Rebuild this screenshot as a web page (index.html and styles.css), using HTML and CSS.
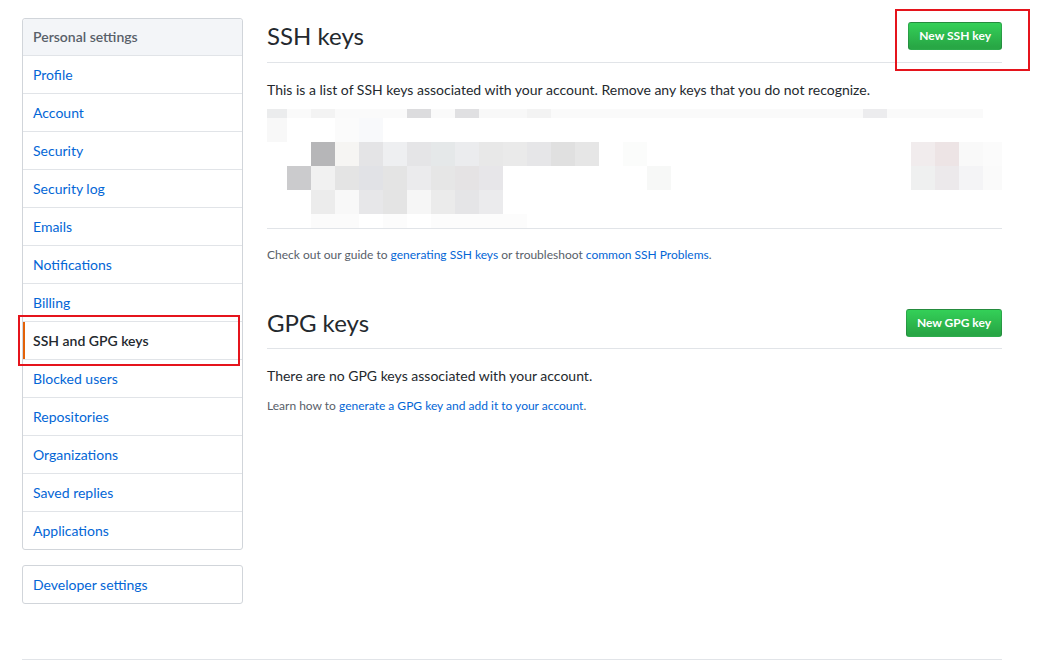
FILE: index.html
```html
<!DOCTYPE html>
<html lang="en">
<head>
<meta charset="utf-8">
<title>SSH and GPG keys</title>
<link rel="stylesheet" href="styles.css">
</head>
<body>
<div class="page">
  <div class="layout">
    <aside class="sidebar">
      <nav class="menu">
        <h3 class="menu-heading">Personal settings</h3>
        <a class="menu-item" href="#">Profile</a>
        <a class="menu-item" href="#">Account</a>
        <a class="menu-item" href="#">Security</a>
        <a class="menu-item" href="#">Security log</a>
        <a class="menu-item" href="#">Emails</a>
        <a class="menu-item" href="#">Notifications</a>
        <a class="menu-item" href="#">Billing</a>
        <a class="menu-item selected" href="#">SSH and GPG keys<span class="annot annot-menu"></span></a>
        <a class="menu-item" href="#">Blocked users</a>
        <a class="menu-item" href="#">Repositories</a>
        <a class="menu-item" href="#">Organizations</a>
        <a class="menu-item" href="#">Saved replies</a>
        <a class="menu-item last" href="#">Applications</a>
      </nav>
      <nav class="menu">
        <a class="menu-item last" href="#">Developer settings</a>
      </nav>
    </aside>

    <main class="main">
      <div class="subhead">
        <h2 class="subhead-heading">SSH keys</h2>
        <div class="subhead-actions">
          <a class="btn" href="#">New SSH key<span class="annot annot-btn"></span></a>
        </div>
      </div>
      <p class="lead">This is a list of SSH keys associated with your account. Remove any keys that you do not recognize.</p>

      <div class="mosaic">
        <div class="mrow r1">
          <i style="background:#ebeced"></i><i style="background:#fafafa"></i><i style="background:#f3f3f3"></i><i style="background:#fafafa"></i><i style="background:#fafafa"></i><i style="background:#fafafa"></i><i style="background:#dcdcde"></i><i style="background:#fafafa"></i><i style="background:#e0e0e2"></i><i style="background:#f8f8f8"></i><i style="background:#f8f8f8"></i><i style="background:#f3f3f3"></i><i style="background:#fafafa"></i><i style="background:#fafafa"></i><i style="background:#fafafa"></i><i style="background:#fafafa"></i><i style="background:#fafafa"></i><i style="background:#fafafa"></i><i style="background:#fafafa"></i><i style="background:#fafafa"></i><i style="background:#fafafa"></i><i style="background:#fafafa"></i><i style="background:#fafafa"></i><i style="background:#fafafa"></i><i style="background:#fafafa"></i><i style="background:#ececee"></i><i style="background:#fafafa"></i><i style="background:#fafafa"></i><i style="background:#fafafa"></i><i style="background:#fafafa"></i>
        </div>
        <div class="mrow r2">
          <i style="background:#f8f8f8"></i><i></i><i></i><i style="background:#fbfbfb"></i><i style="background:#f8f9fb"></i>
        </div>
        <div class="mrow r3">
          <i></i><i></i><i style="background:#b6b6b8"></i><i style="background:#f6f5f3"></i><i style="background:#e4e4e6"></i><i style="background:#eeeff1"></i><i style="background:#e5e5e7"></i><i style="background:#e5e8e9"></i><i style="background:#ebecee"></i><i style="background:#e8e8e8"></i><i style="background:#eaeaea"></i><i style="background:#e6e6e8"></i><i style="background:#e0e0e0"></i><i style="background:#e6e6e6"></i><i></i><i style="background:#fbfcfb"></i><i></i><i></i><i></i><i></i><i></i><i></i><i></i><i></i><i></i><i></i><i></i><i style="background:#f1eced"></i><i style="background:#ede4e5"></i><i style="background:#f9f9f9"></i><i style="background:#fbfbfb"></i>
        </div>
        <div class="mrow r4">
          <i></i><i style="background:#cbcbcd"></i><i style="background:#f1f1f1"></i><i style="background:#e4e4e4"></i><i style="background:#e1e2e6"></i><i style="background:#e4e4e4"></i><i style="background:#ebebed"></i><i style="background:#e6e6e6"></i><i style="background:#e5e3e4"></i><i style="background:#e7e6e9"></i><i></i><i></i><i></i><i></i><i></i><i></i><i style="background:#f7f8f7"></i><i></i><i></i><i></i><i></i><i></i><i></i><i></i><i></i><i></i><i></i><i style="background:#eff0f0"></i><i style="background:#ece9eb"></i><i style="background:#f4f4f6"></i><i style="background:#fafafa"></i>
        </div>
        <div class="mrow r5">
          <i></i><i></i><i style="background:#ececec"></i><i style="background:#f8f8f8"></i><i style="background:#e7e7e9"></i><i style="background:#e4e4e4"></i><i style="background:#f6f6f6"></i><i style="background:#ebebeb"></i><i style="background:#e5e5e7"></i><i style="background:#ebebed"></i>
        </div>
        <div class="mrow r6">
          <i></i><i></i><i style="background:#fbfbfb"></i><i style="background:#fbfbfb"></i><i></i><i style="background:#fcfcfc"></i><i></i><i style="background:#fcfcfc"></i><i style="background:#fcfcfc"></i><i style="background:#fcfcfc"></i><i style="background:#fcfcfc"></i>
        </div>
      </div>

      <p class="note">Check out our guide to <a href="#">generating SSH keys</a> or troubleshoot <a href="#">common SSH Problems</a>.</p>

      <div class="subhead spacious">
        <h2 class="subhead-heading">GPG keys</h2>
        <div class="subhead-actions">
          <a class="btn" href="#">New GPG key</a>
        </div>
      </div>
      <p class="lead">There are no GPG keys associated with your account.</p>
      <p class="note">Learn how to <a href="#">generate a GPG key and add it to your account</a>.</p>
    </main>
  </div>
  <footer class="footer"></footer>
</div>
</body>
</html>
```

FILE: styles.css
```css
* { box-sizing: border-box; }

html, body {
  margin: 0;
  padding: 0;
  background: #fff;
}

body {
  font-family: Lato, "Noto Sans", "Liberation Sans", sans-serif;
  font-size: 14px;
  line-height: 21px;
  color: #24292e;
}

a { color: #0366d6; text-decoration: none; }

.page {
  width: 980px;
  margin-left: 22px;
  padding-top: 18px;
}

.layout {
  display: flex;
  gap: 24px;
  align-items: flex-start;
}

.sidebar {
  width: 221px;
  flex: 0 0 221px;
  display: flex;
  flex-direction: column;
  gap: 15px;
}

.menu {
  border: 1px solid #d1d5da;
  border-radius: 3px;
  background: #fff;
  display: flex;
  flex-direction: column;
}

.menu-heading {
  margin: 0;
  padding: 8px 10px;
  font-size: 14px;
  line-height: 20px;
  font-weight: 600;
  color: #586069;
  background: #f3f5f8;
  border-bottom: 1px solid #e1e4e8;
  border-radius: 3px 3px 0 0;
}

.menu-item {
  position: relative;
  display: block;
  padding: 8px 10px;
  line-height: 21px;
  color: #0366d6;
  border-bottom: 1px solid #e1e4e8;
}

.menu-item.last { border-bottom: 0; }

.menu-item.selected {
  color: #24292e;
  font-weight: 600;
}

.menu-item.selected::before {
  content: "";
  position: absolute;
  top: 0;
  bottom: 0;
  left: 0;
  width: 2px;
  background: #e36209;
}

.annot {
  position: absolute;
  border: 2px solid #e5141c;
  pointer-events: none;
}

.annot-menu {
  left: -5px;
  top: -7px;
  width: 222px;
  height: 51px;
}

.annot-btn {
  left: -14px;
  top: -14px;
  width: 135px;
  height: 62px;
}

.main {
  width: 735px;
  flex: 0 0 735px;
}

.subhead {
  display: flex;
  padding-bottom: 8px;
  margin-bottom: 16px;
  border-bottom: 1px solid #e1e4e8;
}

.subhead.spacious {
  margin-top: 41px;
  padding-bottom: 7px;
}

.subhead-heading {
  flex: 1 1 auto;
  margin: 0;
  font-size: 24px;
  line-height: 36px;
  font-weight: 400;
}

.subhead-actions {
  align-self: center;
  margin: 4px 0 4px 4px;
}

.btn {
  position: relative;
  display: inline-block;
  padding: 3px 10px;
  font-size: 12px;
  line-height: 20px;
  font-weight: 700;
  color: #fff;
  background: linear-gradient(#34d058, #28a745 90%);
  border: 1px solid rgba(27, 31, 35, 0.2);
  border-radius: 3px;
}

.lead {
  margin: 0 0 9px;
}

.mosaic {
  overflow: hidden;
  border-bottom: 1px solid #e1e4e8;
}

.mrow {
  display: grid;
  grid-template-columns: 20px repeat(30, 24px);
}

.mrow i { display: block; }

.r1 { height: 9px; }
.r2, .r3, .r4, .r5 { height: 24px; }
.r6 { height: 14px; }

.note {
  margin: 17px 0 10px;
  font-size: 12px;
  line-height: 18px;
  color: #586069;
}

.lead + .note { margin-top: 11px; }

.footer {
  margin-top: 55px;
  border-top: 1px solid #e1e4e8;
  height: 20px;
}
```
